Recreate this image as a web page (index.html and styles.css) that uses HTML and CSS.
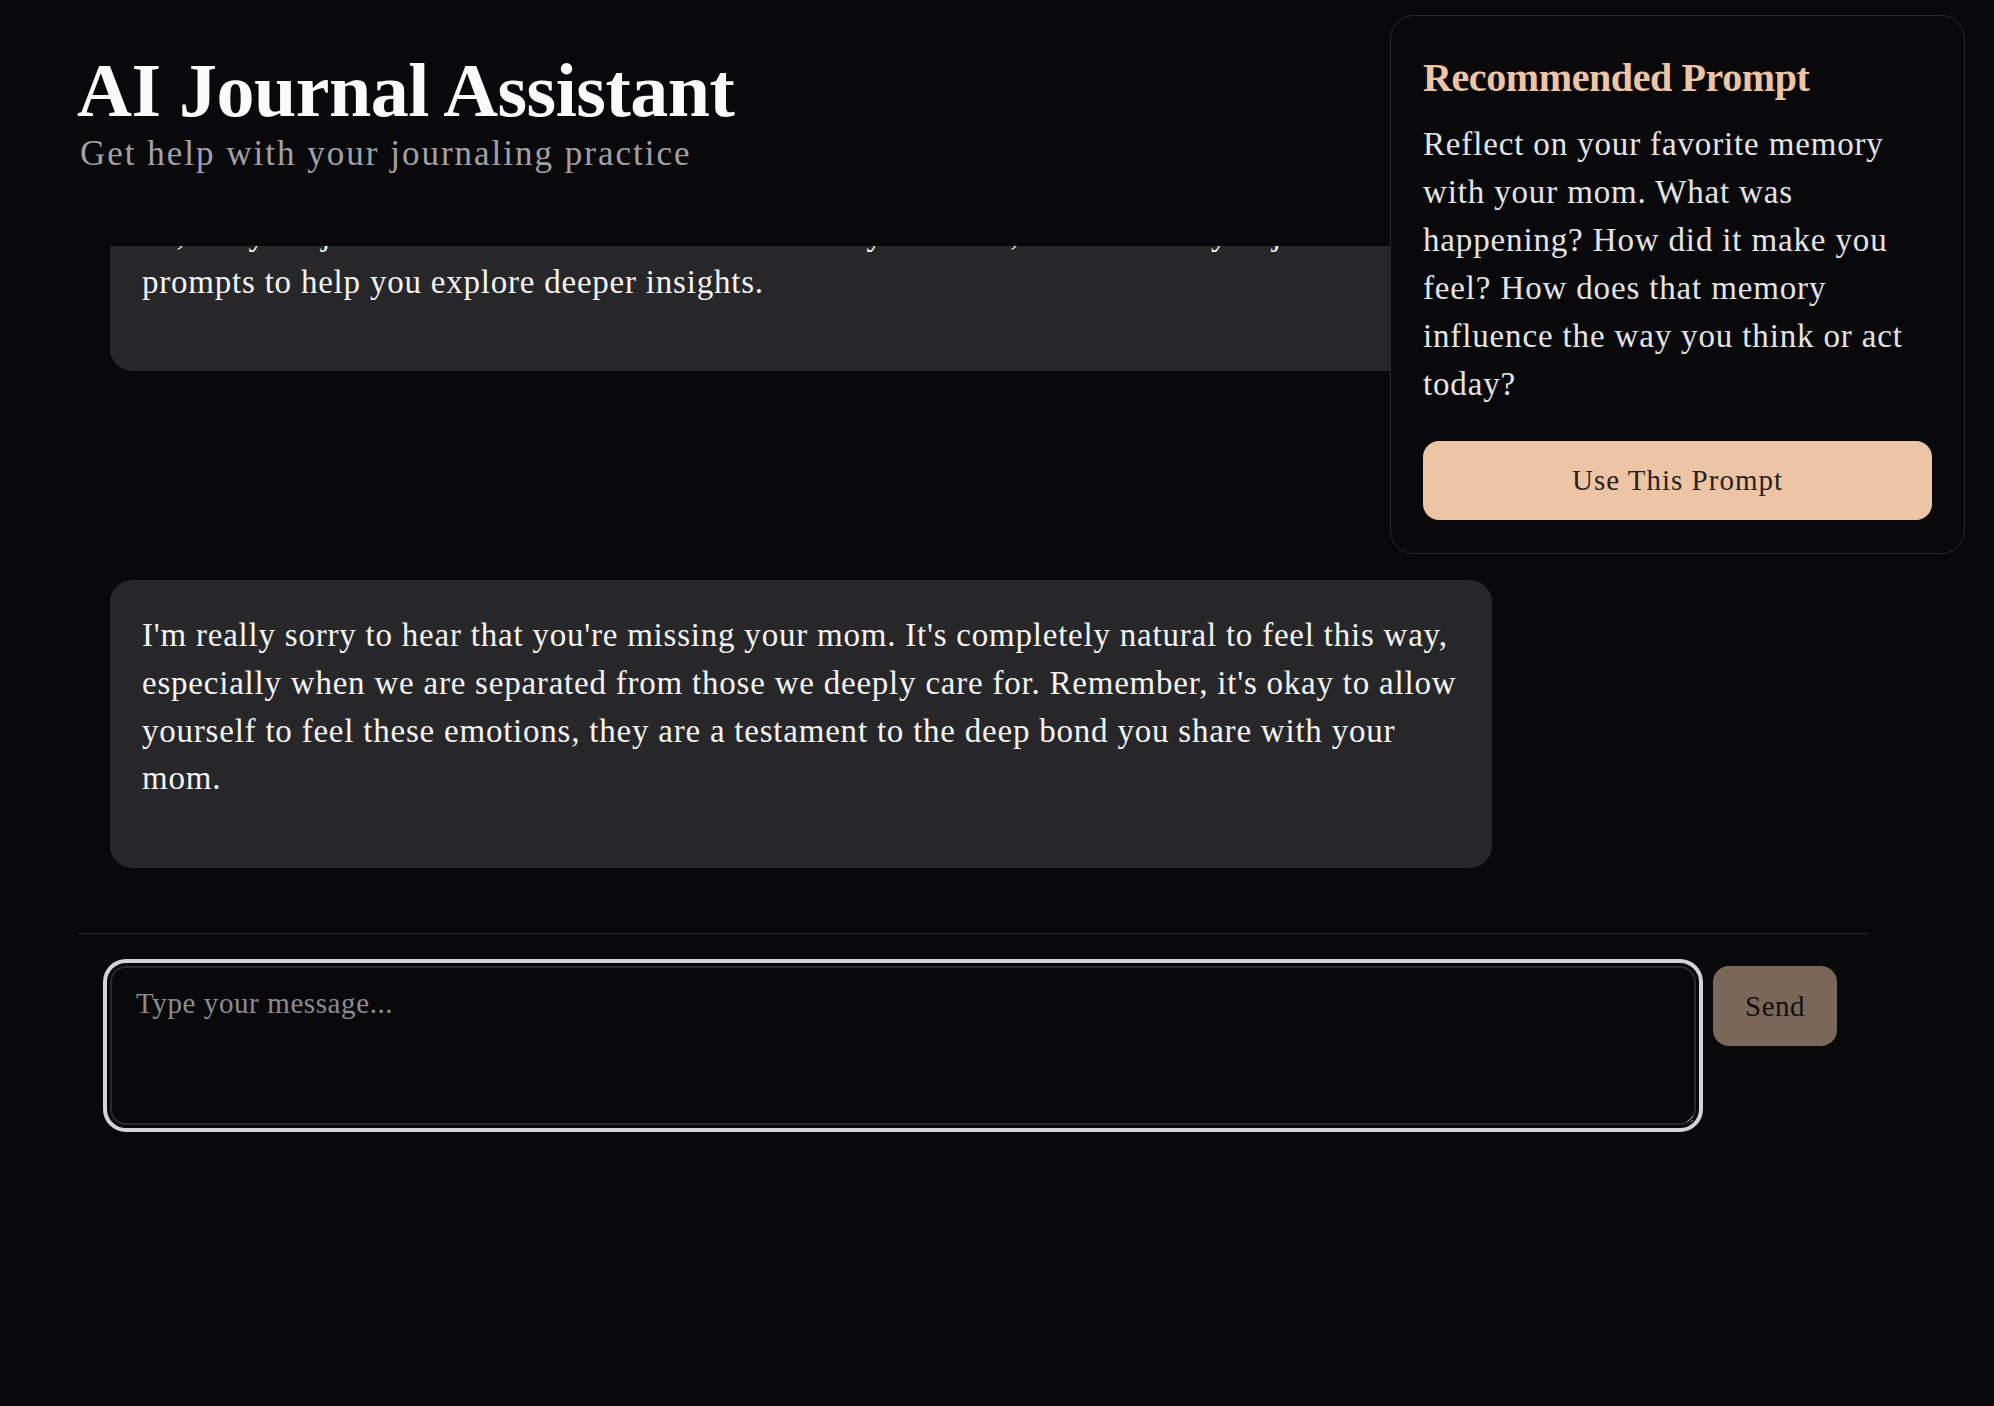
FILE: index.html
```html
<!DOCTYPE html>
<html lang="en">
<head>
<meta charset="utf-8">
<title>AI Journal Assistant</title>
<link rel="stylesheet" href="styles.css">
</head>
<body>
<div class="app">
  <header class="header">
    <h1 class="title">AI Journal Assistant</h1>
    <p class="subtitle">Get help with your journaling practice</p>
  </header>

  <main class="messages">
    <div class="bubble bubble-assistant">
      <p>Hi, I'm your journal assistant. Share whatever is on your mind, and I'll offer you journaling prompts to help you explore deeper insights.</p>
    </div>
    <div class="bubble bubble-user">
      <p>I miss my mom.</p>
    </div>
    <div class="bubble bubble-assistant">
      <p>I'm really sorry to hear that you're missing your mom. It's completely natural to feel this way, especially when we are separated from those we deeply care for. Remember, it's okay to allow yourself to feel these emotions, they are a testament to the deep bond you share with your mom.</p>
    </div>
  </main>

  <section class="composer">
    <textarea class="composer-input" placeholder="Type your message..." autofocus></textarea>
    <button class="send-btn" disabled>Send</button>
  </section>

  <aside class="prompt-card">
    <h2 class="prompt-title">Recommended Prompt</h2>
    <p class="prompt-text">Reflect on your favorite memory with your mom. What was happening? How did it make you feel? How does that memory influence the way you think or act today?</p>
    <button class="prompt-btn">Use This Prompt</button>
  </aside>
</div>
</body>
</html>
```
FILE: styles.css
```css
* { box-sizing: border-box; }

html, body {
  margin: 0;
  padding: 0;
  background: #09090b;
  color: #f4f4f5;
  font-family: "Liberation Serif", "Times New Roman", serif;
  overflow: hidden;
}

.app {
  width: 1791px;
  margin-left: 78px;
  height: 100vh;
  display: flex;
  flex-direction: column;
}

.header {
  flex-shrink: 0;
  height: 246px;
  padding: 52px 0 0 0;
}

.title {
  margin: 0 0 0 -1px;
  font-size: 76px;
  font-weight: 700;
  letter-spacing: -0.5px;
  line-height: 76px;
  color: #fafafa;
}

.subtitle {
  margin: 7px 0 0;
  font-size: 35px;
  line-height: 37px;
  letter-spacing: 2px;
  color: #a1a1aa;
  padding-left: 2px;
}

.messages {
  flex-shrink: 0;
  height: 687px;
  overflow: hidden;
  display: flex;
  flex-direction: column;
  justify-content: flex-end;
  gap: 32px;
  padding: 0 32px 65px;
}

.bubble {
  max-width: 80%;
  flex-shrink: 0;
  border-radius: 22px;
  padding: 32px 32px 65px;
  background: #27272a;
}

.bubble p {
  margin: 0;
  font-size: 33px;
  line-height: 47.7px;
  letter-spacing: 0.78px;
  color: #f4f4f5;
}

.bubble-assistant { align-self: flex-start; }
.bubble-user { align-self: flex-end; }

.composer {
  border-top: 1px solid #27272a;
  padding: 32px 32px 0;
  display: flex;
  align-items: flex-start;
  gap: 17px;
}

.composer-input {
  flex: 1;
  height: 159px;
  background: #09090b;
  border: 2px solid #2a2a2e;
  border-radius: 16px;
  padding: 14px 24px;
  font-family: "Liberation Serif", "Times New Roman", serif;
  font-size: 29px;
  line-height: 42px;
  letter-spacing: 0.6px;
  color: #f4f4f5;
  outline: 4px solid #d4d4d8;
  outline-offset: 3px;
  caret-color: #ffffff;
}

.composer-input::placeholder { color: #8b8b92; }

.send-btn {
  width: 124px;
  height: 80px;
  border: none;
  border-radius: 16px;
  background: #edc5a5;
  color: #18181b;
  opacity: 0.5;
  font-family: "Liberation Serif", "Times New Roman", serif;
  font-size: 29px;
  letter-spacing: 0.5px;
}

.prompt-card {
  position: fixed;
  top: 15px;
  right: 29px;
  width: 575px;
  padding: 38px 32px 33px;
  border: 1px solid #2a2a2e;
  border-radius: 24px;
  background: #09090b;
  z-index: 3;
}

.prompt-title {
  margin: 0 0 18px;
  font-size: 40px;
  font-weight: 700;
  line-height: 48px;
  letter-spacing: -0.4px;
  color: #edc5a5;
}

.prompt-text {
  margin: 0 0 33px;
  font-size: 33px;
  line-height: 48px;
  letter-spacing: 0.85px;
  color: #e4e4e7;
}

.prompt-btn {
  display: block;
  width: 100%;
  height: 79px;
  border: none;
  border-radius: 16px;
  background: #edc5a5;
  color: #27221e;
  font-family: "Liberation Serif", "Times New Roman", serif;
  font-size: 29px;
  letter-spacing: 1px;
}
```
